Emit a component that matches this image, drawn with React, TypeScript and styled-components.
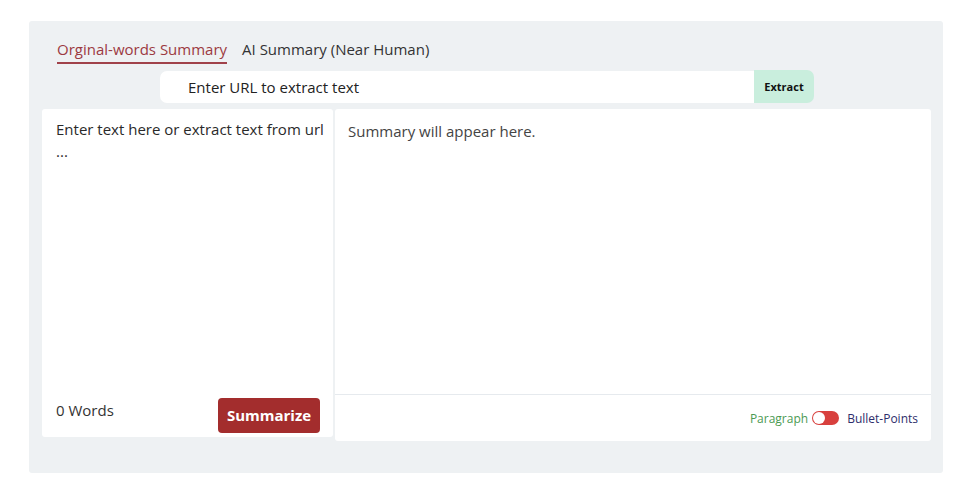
import React, { useState } from "react";
import styled, { createGlobalStyle } from "styled-components";

const GlobalStyle = createGlobalStyle`
  html, body {
    margin: 0;
    padding: 0;
    background: #ffffff;
    font-family: "Open Sans", "Noto Sans", sans-serif;
  }
  * {
    box-sizing: border-box;
  }
`;

const Page = styled.div`
  padding: 21px 32px 27px 29px;
`;

const Container = styled.div`
  background: #eef1f3;
  border-radius: 3px;
  height: 452px;
  padding: 17px 12px 0 13px;
`;

const Tabs = styled.div`
  display: flex;
  gap: 15px;
  margin-left: 15px;
`;

const Tab = styled.button<{ active?: boolean }>`
  border: none;
  background: none;
  padding: 0 0 2px;
  font-family: inherit;
  font-size: 15px;
  line-height: 22px;
  color: ${(p) => (p.active ? "#9c3a41" : "#333333")};
  border-bottom: 2px solid ${(p) => (p.active ? "#a0424a" : "transparent")};
  cursor: pointer;
`;

const UrlRow = styled.div`
  display: flex;
  margin: 7px 0 0 118px;
  width: 654px;
  height: 32px;
`;

const UrlInput = styled.input`
  flex: 1;
  border: none;
  outline: none;
  background: #ffffff;
  border-radius: 7px 0 0 7px;
  padding: 0 0 0 28px;
  font-family: inherit;
  font-size: 15px;
  color: #222222;
  &::placeholder {
    color: #222222;
  }
`;

const ExtractButton = styled.button`
  width: 60px;
  margin-top: -1px;
  border: none;
  background: #c9eedd;
  border-radius: 0 7px 7px 0;
  font-family: inherit;
  font-weight: 700;
  font-size: 11px;
  color: #111111;
`;

const Panels = styled.div`
  display: flex;
  gap: 2px;
  margin-top: 6px;
  align-items: flex-start;
`;

const Panel = styled.div<{ w: number; h: number }>`
  width: ${(p) => p.w}px;
  height: ${(p) => p.h}px;
  background: #ffffff;
  border-radius: 3px;
  display: flex;
  flex-direction: column;
`;

const TextArea = styled.textarea`
  flex: 1;
  border: none;
  outline: none;
  resize: none;
  padding: 9px 5px 9px 14px;
  font-family: inherit;
  font-size: 15px;
  line-height: 22px;
  color: #2a2a2a;
  background: transparent;
  &::placeholder {
    color: #2a2a2a;
  }
`;

const SummaryText = styled.div`
  flex: 1;
  padding: 11px 13px;
  font-size: 15px;
  line-height: 22px;
  color: #444444;
`;

const LeftFooter = styled.div`
  height: 45px;
  display: flex;
  align-items: center;
  justify-content: space-between;
  padding: 0 13px 0 14px;
`;

const WordCount = styled.span`
  font-size: 15px;
  color: #333333;
  margin-top: -9px;
`;

const SummarizeButton = styled.button`
  width: 102px;
  height: 35px;
  margin-top: 1px;
  border: none;
  border-radius: 4px;
  background: #a32d2d;
  color: #ffffff;
  font-family: inherit;
  font-weight: 700;
  font-size: 15px;
`;

const RightFooter = styled.div`
  height: 47px;
  border-top: 1px solid #e6eaee;
  display: flex;
  align-items: center;
  justify-content: flex-end;
  gap: 4px;
  padding: 0 13px 0 0;
`;

const ModeLabel = styled.span<{ color: string }>`
  font-size: 12px;
  color: ${(p) => p.color};
`;

const Switch = styled.button<{ on: boolean }>`
  position: relative;
  width: 27px;
  height: 14px;
  border-radius: 7px;
  border: none;
  padding: 0;
  margin-right: 4px;
  background: #d8403e;
  cursor: pointer;
`;

const Knob = styled.span<{ on: boolean }>`
  position: absolute;
  top: 1px;
  left: ${(p) => (p.on ? "14px" : "1px")};
  width: 12px;
  height: 12px;
  border-radius: 50%;
  background: #ffffff;
`;

export default function App() {
  const [tab, setTab] = useState(0);
  const [bullets, setBullets] = useState(false);
  const [text, setText] = useState("");
  const words = text.trim() ? text.trim().split(/\s+/).length : 0;

  return (
    <Page>
      <GlobalStyle />
      <Container>
        <Tabs>
          <Tab active={tab === 0} onClick={() => setTab(0)}>
            Orginal-words Summary
          </Tab>
          <Tab active={tab === 1} onClick={() => setTab(1)}>
            AI Summary (Near Human)
          </Tab>
        </Tabs>
        <UrlRow>
          <UrlInput placeholder="Enter URL to extract text" />
          <ExtractButton>Extract</ExtractButton>
        </UrlRow>
        <Panels>
          <Panel w={291} h={328}>
            <TextArea
              placeholder="Enter text here or extract text from url ..."
              value={text}
              onChange={(e) => setText(e.target.value)}
            />
            <LeftFooter>
              <WordCount>{words} Words</WordCount>
              <SummarizeButton>Summarize</SummarizeButton>
            </LeftFooter>
          </Panel>
          <Panel w={596} h={332}>
            <SummaryText>Summary will appear here.</SummaryText>
            <RightFooter>
              <ModeLabel color="#4c9a52">Paragraph</ModeLabel>
              <Switch on={bullets} onClick={() => setBullets(!bullets)}>
                <Knob on={bullets} />
              </Switch>
              <ModeLabel color="#2e2d6b">Bullet-Points</ModeLabel>
            </RightFooter>
          </Panel>
        </Panels>
      </Container>
    </Page>
  );
}
